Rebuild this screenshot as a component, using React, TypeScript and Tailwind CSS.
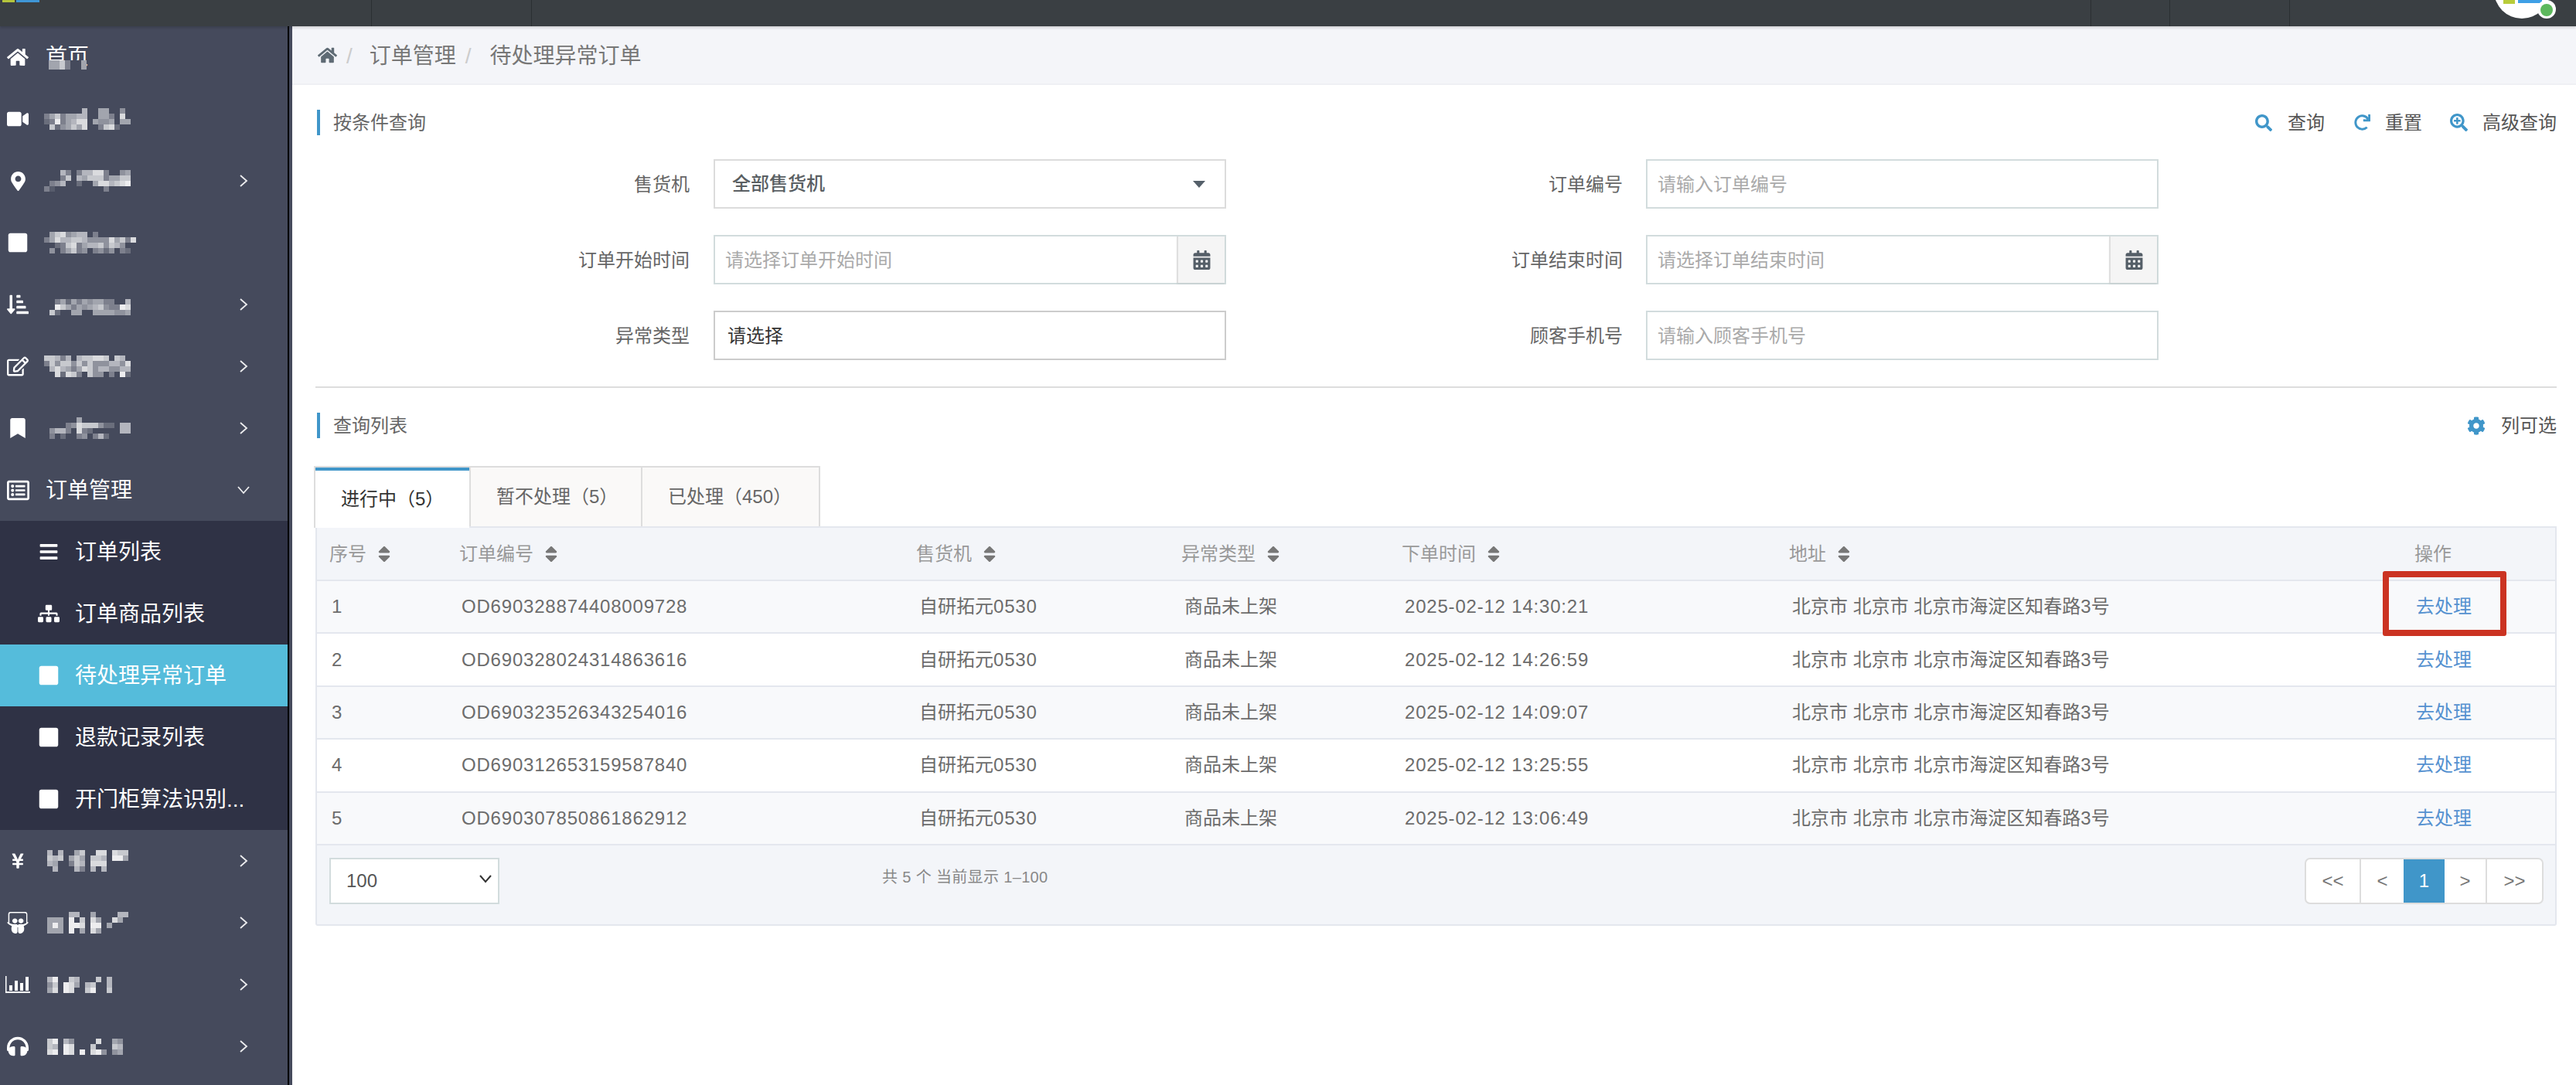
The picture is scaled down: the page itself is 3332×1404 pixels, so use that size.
import React from "react";
import {
  FaHome, FaVideo, FaMapMarkerAlt, FaSquare, FaSortAmountDownAlt, FaRegEdit, FaBookmark, FaRegListAlt,
  FaBars, FaSitemap, FaYenSign, FaSlideshare, FaHeadphones, FaSearch, FaRedo, FaSearchPlus, FaCog, FaCalendarAlt, FaSort,
} from "react-icons/fa";

function Mosaic({ rows, cell = 7 }: { rows: string[]; cell?: number }) {
  const cols = Math.max(...rows.map((r) => r.length));
  return (
    <svg width={cols * cell} height={rows.length * cell} className="block shrink-0" shapeRendering="crispEdges">
      {rows.map((r, y) =>
        r.split("").map((c, x) =>
          c === "0" ? null : <rect key={`${x}-${y}`} x={x * cell} y={y * cell} width={cell} height={cell} fill="#fff" opacity={Number(c) / 10} />
        )
      )}
    </svg>
  );
}

function ChevronRight() {
  return (
    <svg width="12" height="18" viewBox="0 0 12 18" className="block shrink-0" fill="none" stroke="#fff" strokeWidth="1.8" strokeOpacity="0.9">
      <polyline points="2,2 10,9 2,16" />
    </svg>
  );
}
function ChevronDown() {
  return (
    <svg width="18" height="12" viewBox="0 0 18 12" className="block shrink-0" fill="none" stroke="#fff" strokeWidth="1.8" strokeOpacity="0.9">
      <polyline points="2,2 9,10 16,2" />
    </svg>
  );
}
function BarChartIcon() {
  return (
    <svg width="32" height="22" viewBox="0 0 32 22" fill="#fff" className="block">
      <path d="M0 0h1.5v20H32v2H0z" />
      <rect x="5" y="12" width="4" height="7" />
      <rect x="12" y="6" width="4" height="13" />
      <rect x="19" y="9" width="4" height="10" />
      <rect x="26" y="1" width="4" height="18" />
    </svg>
  );
}

type Item = { icon: React.ReactNode; rows: string[]; indent?: string; chevron?: boolean };

const topA: Item[] = [
  {
    icon: <FaVideo size={28} />,
    rows: ["0000000600550040", "3573556600553080", "2393568805445055", "0724575800378200"],
  },
  {
    icon: <FaMapMarkerAlt size={25} />,
    chevron: true,
    rows: ["0006303668830045", "0003706577735577", "0346002005886789", "3100000000030000"],
  },
  {
    icon: <FaSquare size={28} />,
    rows: ["0578456603000000000", "3586677644448573800", "0023783566747640000", "0403573403424032000"],
  },
  {
    icon: <FaSortAmountDownAlt size={28} />,
    chevron: true,
    rows: ["0000000000000000", "0035253545533006", "0097535456743398", "0720055005555445"],
  },
  {
    icon: <FaRegEdit size={28} />,
    chevron: true,
    rows: ["7763606778870760", "3747747474446648", "0686535874664466", "0082873074403092"],
  },
  {
    icon: <FaBookmark size={26} />,
    chevron: true,
    rows: ["0000005000000000", "0000348777422066", "0466308320000066", "0302003403620000"],
  },
];
const bottom: Item[] = [
  { icon: <FaYenSign size={22} />, chevron: true, indent: "ml-[15px] w-[248px]", rows: ["606005700880877", "767057507760995", "650037608880000", "060006306060000"] },
  { icon: <FaSlideshare size={28} />, chevron: true, indent: "ml-[15px] w-[248px]", rows: ["000066005000066", "555090708500850", "595099809905000", "555090508500000"] },
  { icon: <BarChartIcon />, chevron: true, indent: "ml-[15px] w-[248px]", rows: ["6900760007060", "4709850670060", "5809800790070"] },
  { icon: <FaHeadphones size={28} />, chevron: true, indent: "ml-[15px] w-[248px]", rows: ["790640000800540", "760980007000760", "890980908940450"] },
];

function NavItem({ it }: { it: Item }) {
  return (
    <div className="flex h-[80px] items-center text-white">
      <div className="flex w-[46px] shrink-0 items-center justify-center">{it.icon}</div>
      <div className={`${it.indent ?? "ml-[11px] w-[252px]"} shrink-0`}>
        <Mosaic rows={it.rows} />
      </div>
      {it.chevron && <ChevronRight />}
    </div>
  );
}

function Sub({ icon, text, active }: { icon: React.ReactNode; text: string; active?: boolean }) {
  return (
    <div className={`flex h-[80px] items-center text-[28px] text-white ${active ? "bg-[#55bcdb]" : ""}`}>
      <div className="ml-[46px] flex w-[34px] shrink-0 items-center justify-center">{icon}</div>
      <span className="ml-[17px] mt-[2px] whitespace-nowrap">{text}</span>
    </div>
  );
}

function Sidebar() {
  return (
    <aside className="flex w-[378px] shrink-0 bg-[#454a5c]">
      <div className="w-[372px] overflow-hidden">
        <div className="flex h-[80px] items-center text-white">
          <div className="flex w-[46px] shrink-0 items-center justify-center">
            <FaHome size={28} />
          </div>
          <div className="relative ml-[13px] text-[28px]">
            首页
            <div className="absolute bottom-[5px] left-[4px] h-[12px] w-[49px] overflow-hidden bg-[#454a5c]">
              <Mosaic rows={["5573005", "5573005"]} />
            </div>
          </div>
        </div>
        {topA.map((it, i) => (
          <NavItem key={i} it={it} />
        ))}
        <div className="flex h-[80px] items-center text-white">
          <div className="flex w-[46px] shrink-0 items-center justify-center">
            <FaRegListAlt size={29} />
          </div>
          <span className="ml-[13px] mt-[2px] w-[247px] shrink-0 text-[28px]">订单管理</span>
          <ChevronDown />
        </div>
        <div className="bg-[#2f3245]">
          <Sub icon={<FaBars size={26} />} text="订单列表" />
          <Sub icon={<FaSitemap size={28} />} text="订单商品列表" />
          <Sub icon={<FaSquare size={28} />} text="待处理异常订单" active />
          <Sub icon={<FaSquare size={28} />} text="退款记录列表" />
          <Sub icon={<FaSquare size={28} />} text="开门柜算法识别..." />
        </div>
        {bottom.map((it, i) => (
          <NavItem key={i} it={it} />
        ))}
      </div>
      <div className="w-[2px] bg-black" />
    </aside>
  );
}

function TopBar() {
  return (
    <header className="relative flex h-[34px] shrink-0 overflow-hidden bg-[#3a3f43] shadow-[0_2px_3px_rgba(0,0,0,0.15)]">
      <div className="ml-[3px] mt-0 h-[3px] w-[16px] bg-[#b4c43c]" />
      <div className="ml-[2px] h-[3px] w-[30px] bg-[#3f96d6]" />
      <div className="ml-[429px] h-full w-px bg-[#2b2f32]" />
      <div className="ml-[206px] h-full w-px bg-[#2b2f32]" />
      <div className="ml-[2016px] h-full w-px bg-[#2b2f32]" />
      <div className="ml-[101px] h-full w-px bg-[#2b2f32]" />
      <div className="ml-[154px] h-full w-px bg-[#2b2f32]" />
      <div className="absolute left-[3226px] top-[-48px] h-[72px] w-[72px] rounded-full bg-white" />
      <div className="absolute left-[3238px] top-0 h-[5px] w-[15px] bg-[#b8cc3a]" />
      <div className="absolute left-[3257px] top-0 h-[4px] w-[31px] bg-[#3fa0e6]" />
      <div className="absolute left-[3282px] top-0 h-[24px] w-[24px] rounded-full bg-white" />
      <div className="absolute left-[3286px] top-[5px] h-[16px] w-[16px] rounded-full bg-[#5cb85c]" />
    </header>
  );
}

function Section({ title, children }: { title: string; children: React.ReactNode }) {
  return (
    <div className="flex h-[33px] items-center">
      <div className="h-full w-[4px] bg-[#4096c9]" />
      <div className="ml-[17px] text-[24px] text-[#666]">{title}</div>
      <div className="ml-auto flex items-center text-[24px] text-[#555]">{children}</div>
    </div>
  );
}

function Label({ w, text }: { w: string; text: string }) {
  return <div className={`${w} mt-[2px] shrink-0 text-right text-[24px] text-[#666]`}>{text}</div>;
}

function Field({ placeholder, calendar, className = "" }: { placeholder: string; calendar?: boolean; className?: string }) {
  return (
    <div className={`flex h-[64px] w-[663px] shrink-0 border-2 border-[#d2dcdd] bg-white ${className}`}>
      <div className="flex flex-1 items-center pl-[13px] pt-[1px] text-[24px] text-[#aaa]">{placeholder}</div>
      {calendar && (
        <div className="flex w-[62px] items-center justify-center border-l-2 border-[#dfdfdf] bg-[#f5f5f5] text-[#555f68] shadow-[0_2px_2px_rgba(0,0,0,0.05)]">
          <FaCalendarAlt size={25} />
        </div>
      )}
    </div>
  );
}

function Form() {
  return (
    <div className="mt-[31px] flex flex-col gap-[34px]">
      <div className="flex items-center">
        <Label w="w-[484px]" text="售货机" />
        <div className="ml-[31px] flex h-[64px] w-[663px] shrink-0 items-center justify-between border-2 border-[#dcdcdc] bg-white pl-[22px] pr-[25px] text-[24px] font-medium text-[#5a5f63]">
          全部售货机
          <svg width="16" height="9" viewBox="0 0 16 9" className="block">
            <path d="M0 0h16L8 9z" fill="#55606a" />
          </svg>
        </div>
        <Label w="w-[513px]" text="订单编号" />
        <Field className="ml-[30px]" placeholder="请输入订单编号" />
      </div>
      <div className="flex items-center">
        <Label w="w-[484px]" text="订单开始时间" />
        <Field className="ml-[31px]" placeholder="请选择订单开始时间" calendar />
        <Label w="w-[513px]" text="订单结束时间" />
        <Field className="ml-[30px]" placeholder="请选择订单结束时间" calendar />
      </div>
      <div className="flex items-center">
        <Label w="w-[484px]" text="异常类型" />
        <div className="ml-[31px] flex h-[64px] w-[663px] shrink-0 items-center border-2 border-[#cccccc] bg-white pl-[16px] pt-[2px] text-[24px] text-[#333]">
          请选择
        </div>
        <Label w="w-[513px]" text="顾客手机号" />
        <Field className="ml-[30px]" placeholder="请输入顾客手机号" />
      </div>
    </div>
  );
}

function Tabs() {
  return (
    <div className="relative z-10 mt-[36px] -mb-[2px] flex h-[80px] items-start text-[24px]">
      <div className="ml-[-2px] flex h-[80px] w-[201px] flex-col border-x-2 border-t-2 border-[#dddddd] border-r-0 bg-white text-[#333]">
        <div className="h-[4px] bg-[#4096c9]" />
        <div className="flex flex-1 items-center pl-[33px]">进行中（5）</div>
      </div>
      <div className="flex h-[78px] w-[224px] items-center border-x-2 border-t-2 border-[#dddddd] bg-[#faf9f8] pl-[33px] text-[#666]">
        暂不处理（5）
      </div>
      <div className="flex h-[78px] w-[230px] items-center border-r-2 border-t-2 border-[#dddddd] bg-[#faf9f8] pl-[33px] text-[#666]">
        已处理（450）
      </div>
    </div>
  );
}

const rows = [
  ["1", "OD690328874408009728", "2025-02-12 14:30:21"],
  ["2", "OD690328024314863616", "2025-02-12 14:26:59"],
  ["3", "OD690323526343254016", "2025-02-12 14:09:07"],
  ["4", "OD690312653159587840", "2025-02-12 13:25:55"],
  ["5", "OD690307850861862912", "2025-02-12 13:06:49"],
];
const heads: [string, boolean][] = [
  ["序号", true],
  ["订单编号", true],
  ["售货机", true],
  ["异常类型", true],
  ["下单时间", true],
  ["地址", true],
  ["操作", false],
];
const widths = ["w-[168px]", "w-[591px]", "w-[343px]", "w-[285px]", "w-[501px]", "w-[809px]", "w-[198px]"];
const num = "tracking-[0.8px]";

function OrderTable() {
  return (
    <div className="relative rounded-b-[3px] border-2 border-[#e4e7ee] bg-[#f3f5f9]">
      <table className="w-full table-fixed border-collapse text-[24px]">
        <colgroup>
          {widths.map((w) => (
            <col key={w} className={w} />
          ))}
        </colgroup>
        <thead>
          <tr className="h-[68px] border-b-2 border-[#e4e7ee] text-left text-[#999]">
            {heads.map(([h, s]) => (
              <th key={h} className="pl-[16px] font-normal">
                <span className="inline-flex items-center gap-[10px]">
                  {h}
                  {s && <FaSort size={26} className="text-[#777]" />}
                </span>
              </th>
            ))}
          </tr>
        </thead>
        <tbody>
          {rows.map((r, i) => (
            <tr key={r[0]} className={`h-[68.4px] border-b-2 border-[#e4e7ee] text-[#6c6c6c] ${i % 2 === 0 ? "bg-[#f8f9fb]" : "bg-white"}`}>
              <td className="pl-[19px]">
                <span className={num}>{r[0]}</span>
              </td>
              <td className="pl-[19px]">
                <span className={num}>{r[1]}</span>
              </td>
              <td className="pl-[20px]">
                自研拓元<span className={num}>0530</span>
              </td>
              <td className="pl-[20px]">商品未上架</td>
              <td className="pl-[20px]">
                <span className={num}>{r[2]}</span>
              </td>
              <td className="pl-[20px]">北京市 北京市 北京市海淀区知春路3号</td>
              <td className="pl-[18px] text-[#5591d0]">去处理</td>
            </tr>
          ))}
        </tbody>
      </table>
      <div className="flex h-[102px] items-start pt-[16px]">
        <div className="ml-[16px] flex h-[60px] w-[220px] items-center justify-between border-2 border-[#d2dcdd] bg-white pl-[20px] pr-[7px] text-[24px] text-[#555]">
          100
          <svg width="18" height="11" viewBox="0 0 18 11" fill="none" stroke="#333" strokeWidth="2" className="mb-[4px] block">
            <polyline points="2,1 9,9 16,1" />
          </svg>
        </div>
        <div className="ml-[495px] mt-[10px] text-[20px] tracking-[0.35px] text-[#888]">共 5 个 当前显示 1–100</div>
        <div className="ml-auto mr-[15px] flex h-[60px] overflow-hidden rounded-[7px] border-2 border-[#dddddd] bg-white text-[24px] text-[#777]">
          <div className="flex w-[71px] items-center justify-center border-r-2 border-[#dddddd]">&lt;&lt;</div>
          <div className="flex w-[55px] items-center justify-center">&lt;</div>
          <div className="-my-[2px] flex w-[53px] items-center justify-center bg-[#4096c9] text-white">1</div>
          <div className="flex w-[55px] items-center justify-center border-r-2 border-[#dddddd]">&gt;</div>
          <div className="flex w-[71px] items-center justify-center">&gt;&gt;</div>
        </div>
      </div>
      <div className="absolute left-[2672px] top-[56px] h-[84px] w-[160px] rounded-[3px] border-[8px] border-[#cb3322]" />
    </div>
  );
}

export default function App() {
  return (
    <div className="flex h-[1404px] w-[3332px] flex-col overflow-hidden bg-white font-['Liberation_Sans','Noto_Sans_CJK_SC',sans-serif]">
      <TopBar />
      <div className="flex min-h-0 flex-1">
        <Sidebar />
        <main className="min-w-0 flex-1">
          <div className="flex h-[76px] items-center border-b-2 border-[#eff0f4] bg-[#f4f5f9] pl-[33px] text-[28px] text-[#777]">
            <FaHome size={25} className="text-[#5f6b75]" />
            <span className="ml-[12px] mt-[3px] text-[#ccc]">/</span>
            <span className="ml-[22px] mt-[3px]">订单管理</span>
            <span className="ml-[12px] mt-[3px] text-[#ccc]">/</span>
            <span className="ml-[24px] mt-[3px]">待处理异常订单</span>
          </div>
          <div className="pl-[30px] pr-[25px]">
            <div className="mt-[32px] pl-[2px]">
              <Section title="按条件查询">
                <FaSearch size={22} className="text-[#4096c9]" />
                <span className="ml-[20px]">查询</span>
                <FaRedo size={21} className="ml-[38px] text-[#4096c9]" />
                <span className="ml-[19px]">重置</span>
                <FaSearchPlus size={23} className="ml-[36px] text-[#4096c9]" />
                <span className="ml-[19px]">高级查询</span>
              </Section>
            </div>
            <Form />
            <div className="mt-[34px] h-[2px] bg-[#dddddd]" />
            <div className="mt-[32px] pl-[2px]">
              <Section title="查询列表">
                <FaCog size={24} className="text-[#4096c9]" />
                <span className="ml-[20px]">列可选</span>
              </Section>
            </div>
            <Tabs />
            <OrderTable />
          </div>
        </main>
      </div>
    </div>
  );
}
